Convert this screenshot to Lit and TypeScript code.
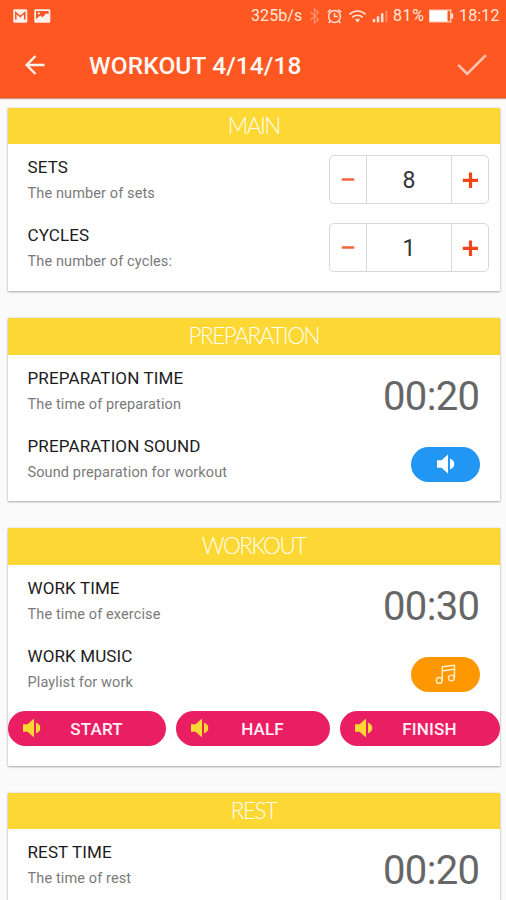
import { LitElement, html, css } from "lit";
import { customElement, property } from "lit/decorators.js";

const speaker = html`<svg class="speaker" viewBox="0 0 20 20" width="20" height="20">
  <path fill="currentColor" d="M1 6.300h4.600L12 .6v18.800l-6.400-5.700H1z" />
  <path fill="currentColor" d="M14 4.800c2.700.7 4.300 2.700 4.300 5.200s-1.600 4.500-4.300 5.200z" />
</svg>`;

const note = html`<svg viewBox="0 0 24 24" width="24" height="24" fill="none" stroke="#ffeecb" stroke-width="1.400" stroke-linejoin="round">
  <circle cx="5.200" cy="18.400" r="2.900" />
  <circle cx="17.400" cy="16" r="2.900" />
  <path d="M8.300 18.400V4.800c4-.3 8-1.100 12.200-1.500V16" />
  <path d="M8.500 8.800c4-.3 8-1.100 11.900-1.500" />
</svg>`;

const gmailIcon = html`<svg viewBox="0 0 15 14" width="15" height="14">
  <rect x=".3" y=".3" width="14" height="13.400" rx="1.200" fill="#fff1ea" />
  <path d="M2.800 10.500V3.600l4.500 4 4.500-4v6.900" fill="none" stroke="#f0562a" stroke-width="1.500" />
</svg>`;

const pictureIcon = html`<svg viewBox="0 0 17 14" width="17" height="14">
  <rect x=".3" y=".3" width="16" height="13.400" rx="1.200" fill="#fff1ea" />
  <path d="M2 2h12.600v3.400l-2.300-1.200-3.800 4-2.300-1.800L2 10z" fill="#f0562a" />
  <circle cx="4.800" cy="4.400" r="1.100" fill="#fff1ea" />
</svg>`;

const statusIcons = html`<svg class="signals" viewBox="0 0 84 18" width="84" height="18" fill="none" stroke="#ffe0d4" stroke-width="1.500">
  <path opacity=".4" d="M2.500 5l8 7.500-4 3.500V2l4 3.500L2.500 13" stroke-width="1.300" />
  <circle cx="26.500" cy="9.500" r="5.900" />
  <path d="M26.500 6v3.600h3.200M19.700 5.200l3-2.700M33.300 5.200l-3-2.700M22 14.300l-1.300 1.800M31 14.300l1.300 1.800" />
  <path d="M41.500 7.300c4.500-4.400 11.500-4.400 16 0M44.300 10.400c3-2.900 7.400-2.900 10.400 0" stroke-width="1.700" />
  <path d="M46.900 12.600c1.600-1.300 3.600-1.300 5.200 0l-2.600 2.800z" fill="#ffe0d4" stroke="none" />
  <path d="M66 15.300v-3.300M70 15.300V9.300M74.200 15.300V6.300" stroke-width="2.500" />
  <path opacity=".4" d="M78.500 15.300V3.300" stroke-width="1.800" />
</svg>`;

@customElement("status-bar")
class StatusBar extends LitElement {
  static styles = css`
    :host { display: flex; align-items: center; height: 31px; padding: 0 7px 0 13px; color: #ffe6dc; font-size: 16px; }
    svg { display: block; flex: none; }
    .left { display: flex; gap: 6px; flex: 1; }
    .rate { width: 52px; letter-spacing: .1px; white-space: nowrap; }
    .signals { margin: 0 1px 0 5px; }
    .level { width: 36px; white-space: nowrap; letter-spacing: .6px; }
    .battery { margin-right: 5px; }
    .clock { width: 40px; white-space: nowrap; letter-spacing: .15px; }
  `;
  render() {
    return html`
      <div class="left">${gmailIcon}${pictureIcon}</div>
      <span class="rate">325b/s</span>
      ${statusIcons}
      <span class="level">81%</span>
      <svg class="battery" viewBox="0 0 25 14" width="25" height="14">
        <rect x=".7" y="1.200" width="21" height="11.600" fill="none" stroke="#ffe0d4" stroke-width="1.200" />
        <rect x="1" y="1.500" width="17.500" height="11" fill="#fff" />
        <path d="M22 4.500h2.200v5H22z" fill="#ffe0d4" />
      </svg>
      <span class="clock">18:12</span>
    `;
  }
}

@customElement("section-card")
class SectionCard extends LitElement {
  @property() heading = "";
  static styles = css`
    :host { display: block; background: #fff; box-shadow: 0 1px 2px rgba(0, 0, 0, .3), 0 0 2px rgba(0, 0, 0, .12); }
    .heading {
      display: flex; align-items: center; justify-content: center; height: 36.500px; padding-bottom: 1px; box-sizing: border-box;
      background: #fdd835; color: #fffdf0; font: 300 22.500px Lato, sans-serif; letter-spacing: -1.500px;
    }
  `;
  render() {
    return html`<div class="heading">${this.heading}</div><slot></slot>`;
  }
}

@customElement("setting-row")
class SettingRow extends LitElement {
  @property() label = "";
  @property() hint = "";
  static styles = css`
    :host { display: flex; justify-content: space-between; height: 68px; padding-left: 19.500px; }
    .text { padding-top: 12px; white-space: nowrap; }
    .label { font-size: 17px; line-height: 22px; letter-spacing: .12px; color: #1c1c1c; }
    .hint { margin-top: 6px; font-size: 14.500px; line-height: 20px; letter-spacing: .12px; color: #7a7a7a; }
  `;
  render() {
    return html`<div class="text"><div class="label">${this.label}</div><div class="hint">${this.hint}</div></div><slot></slot>`;
  }
}

@customElement("number-stepper")
class NumberStepper extends LitElement {
  @property({ type: Number }) value = 0;
  static styles = css`
    :host {
      display: grid; grid-template-columns: 36px 1px 84px 1px 36px; box-sizing: border-box;
      width: 160px; height: 49px; margin: 10.500px 10.500px 0 0; border: 1px solid #d8d8d8; border-radius: 5px;
    }
    .cell { display: flex; align-items: center; justify-content: center; padding-top: 2px; color: #333; font-size: 23px; }
    .line { background: #dadada; }
    svg { display: block; }
  `;
  render() {
    return html`
      <div class="cell"><svg viewBox="0 0 16 16" width="16" height="16"><path d="M1.800 7.500h12.400" stroke="#f0653a" stroke-width="2.500" /></svg></div>
      <div class="line"></div>
      <div class="cell">${this.value}</div>
      <div class="line"></div>
      <div class="cell"><svg viewBox="0 0 16 16" width="16" height="16"><path d="M.8 8.300h15.200M8.500.5v15.500" stroke="#f4441a" stroke-width="3.200" /></svg></div>
    `;
  }
}

@customElement("app-root")
class AppRoot extends LitElement {
  static styles = css`
    :host { display: block; height: 900px; overflow: hidden; background: #fafafa; font-family: Roboto, sans-serif; }
    .top { height: 98px; background: #ff5722; box-shadow: 0 1px 1px rgba(150, 50, 10, .5); }
    .bar { display: flex; align-items: center; height: 67px; padding: 1px 19px 0 25px; box-sizing: border-box; }
    .bar svg { display: block; }
    .title { flex: 1; margin: 1px 0 0 44px; color: #fff8f4; font-size: 24.500px; font-weight: 500; letter-spacing: .1px; white-space: nowrap; }
    .cards { display: flex; flex-direction: column; gap: 27px; padding: 9.500px 6.500px 0 8px; }
    .main { height: 183.500px; }
    .prep { height: 183px; }
    .work { height: 237.500px; }
    .rest { height: 184px; }
    .time { margin: 17px 20px 0 0; font-size: 40px; line-height: 50px; letter-spacing: -.6px; color: #666; }
    .pill {
      display: flex; align-items: center; justify-content: center; width: 69px; height: 35px;
      margin: 24px 19.500px 0 0; border-radius: 18px; background: #2196f3; color: #fff;
    }
    .music { background: #ff9800; }
    .sounds { display: grid; grid-template-columns: 158px 154px 160px; gap: 10px; padding-top: 10px; }
    .sound {
      display: flex; align-items: center; height: 35px; border-radius: 18px; background: #e91e63;
      color: #fdd835; padding-left: 14px; box-sizing: border-box;
    }
    .sound span { flex: 1; text-align: center; color: #fff0f5; font-size: 17px; font-weight: 500; letter-spacing: .15px; padding: 1px 15px 0 0; }
  `;
  render() {
    return html`
      <header class="top">
        <status-bar></status-bar>
        <div class="bar">
          <svg viewBox="0 0 20 20" width="20" height="20" fill="none" stroke="#fff4ee" stroke-width="2.400"><path d="M19.500 10H2M10.500 1L1.600 10l8.900 9" /></svg>
          <div class="title">WORKOUT 4/14/18</div>
          <svg viewBox="0 0 30 22" width="30" height="22" fill="none" stroke="#ffc4b0" stroke-width="2.600"><path d="M1.200 10.800l9 9L28.800 1.200" /></svg>
        </div>
      </header>
      <main class="cards">
        <section-card class="main" heading="MAIN">
          <setting-row label="SETS" hint="The number of sets"><number-stepper value="8"></number-stepper></setting-row>
          <setting-row label="CYCLES" hint="The number of cycles:"><number-stepper value="1"></number-stepper></setting-row>
        </section-card>
        <section-card class="prep" heading="PREPARATION">
          <setting-row label="PREPARATION TIME" hint="The time of preparation"><div class="time">00:20</div></setting-row>
          <setting-row label="PREPARATION SOUND" hint="Sound preparation for workout"><div class="pill">${speaker}</div></setting-row>
        </section-card>
        <section-card class="work" heading="WORKOUT">
          <setting-row label="WORK TIME" hint="The time of exercise"><div class="time">00:30</div></setting-row>
          <setting-row label="WORK MUSIC" hint="Playlist for work"><div class="pill music">${note}</div></setting-row>
          <div class="sounds">
            ${["START", "HALF", "FINISH"].map((name) => html`<div class="sound">${speaker}<span>${name}</span></div>`)}
          </div>
        </section-card>
        <section-card class="rest" heading="REST">
          <setting-row label="REST TIME" hint="The time of rest"><div class="time">00:20</div></setting-row>
        </section-card>
      </main>
    `;
  }
}
